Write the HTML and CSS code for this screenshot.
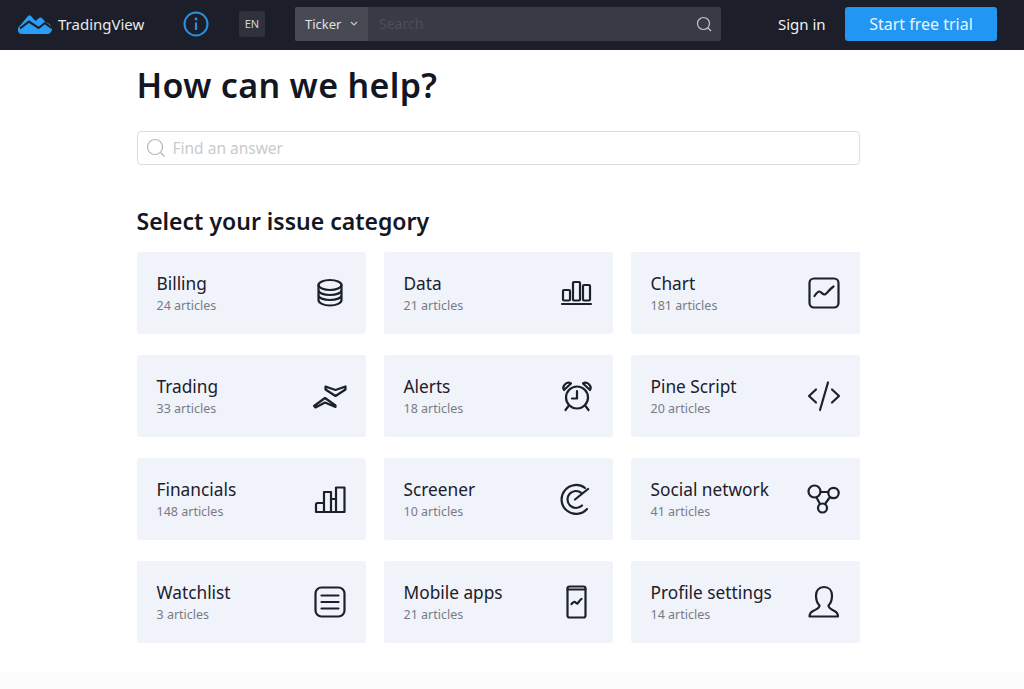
FILE: index.html
```html
<!DOCTYPE html>
<html lang="en">
<head>
<meta charset="utf-8">
<title>TradingView Help Center</title>
<link rel="stylesheet" href="styles.css">
</head>
<body>
<header class="topbar">
  <a class="brand">
    <svg class="brand-logo" viewBox="0 0 34 20" width="34" height="20"><path fill="#2a9df4" d="M0 14 10 2c.8-1 2.200-1 3 0l4.500 5 3.500-3c.8-.7 2-.7 2.800 0l4.200 4.500c2.600.6 6 2.800 6 6.200 0 2.800-2 5.300-4.800 5.300H4c-2.500 0-4-1.700-4-3.500z"/><path fill="none" stroke="#1c1f2a" stroke-width="2.200" d="M2 14.500 11 7.500l9.500 6.500 6.500-5 7 5"/></svg>
    <span class="brand-name">TradingView</span>
  </a>
  <svg class="info" viewBox="0 0 26 26" width="26" height="26"><circle cx="13" cy="13" r="11.500" fill="none" stroke="#2a8fdc" stroke-width="2"/><circle cx="13" cy="8" r="1.400" fill="#2a8fdc"/><path d="M13 11.500v7.500" stroke="#2a8fdc" stroke-width="2.200" fill="none"/></svg>
  <span class="lang">EN</span>
  <div class="search">
    <div class="ticker">Ticker
      <svg viewBox="0 0 8 5" width="8" height="5"><path d="M1 1l3 3 3-3" fill="none" stroke="#c9cbd0" stroke-width="1.100"/></svg>
    </div>
    <span class="search-hint">Search</span>
    <svg class="search-icon" viewBox="0 0 16 16" width="16" height="16"><circle cx="7.500" cy="7.500" r="6" fill="none" stroke="#c3c5ca" stroke-width="1.200"/><path d="M12 12l3 3" stroke="#c3c5ca" stroke-width="1.200"/></svg>
  </div>
  <a class="signin">Sign in</a>
  <a class="trial">Start free trial</a>
</header>

<main class="content">
  <h1 class="title">How can we help?</h1>
  <div class="answer">
    <svg viewBox="0 0 20 20" width="20" height="20"><circle cx="9" cy="9" r="7.500" fill="none" stroke="#b5b7bb" stroke-width="1.200"/><path d="M14.500 14.500l4 4" stroke="#b5b7bb" stroke-width="1.200"/></svg>
    <span>Find an answer</span>
  </div>
  <h2 class="subtitle">Select your issue category</h2>
  <section class="grid">
    <a class="card"><div class="card-text"><div class="card-name">Billing</div><div class="card-count">24 articles</div></div>
      <svg class="ico" viewBox="0 0 36 36"><ellipse cx="18" cy="10" rx="11.500" ry="5"/><path d="M6.500 10v15c0 3 5 5.500 11.500 5.500s11.500-2.500 11.500-5.500V10M6.500 15c0 3 5 5 11.500 5s11.500-2 11.500-5M6.500 20c0 3 5 5 11.500 5s11.500-2 11.500-5"/></svg></a>
    <a class="card"><div class="card-text"><div class="card-name">Data</div><div class="card-count">21 articles</div></div>
      <svg class="ico" viewBox="0 0 36 36"><rect x="4" y="15" width="7" height="10.500" rx="1"/><rect x="14" y="7" width="7" height="18.500" rx="1"/><rect x="24" y="10" width="7" height="15.500" rx="1"/><path d="M3 29h29"/></svg></a>
    <a class="card"><div class="card-text"><div class="card-name">Chart</div><div class="card-count">181 articles</div></div>
      <svg class="ico" viewBox="0 0 36 36"><rect x="3.500" y="3.500" width="29" height="29" rx="4.500"/><path d="M8.500 21c2-3 3.500-4.500 5-4.500s3 3 5 3 4.500-5 9-8"/></svg></a>

    <a class="card"><div class="card-text"><div class="card-name">Trading</div><div class="card-count">33 articles</div></div>
      <svg class="ico" viewBox="0 0 36 36"><path d="M13.500 8.500 23.500 12l10-3.500v3L23.500 18l-10-6.500zM2 28l11-8 10.500 7.500v1.500l-10.500-4.500L3.500 29.500z"/></svg></a>
    <a class="card"><div class="card-text"><div class="card-name">Alerts</div><div class="card-count">18 articles</div></div>
      <svg class="ico" viewBox="0 0 36 36"><circle cx="18" cy="19.500" r="11"/><path d="M18 13v7.500h-5M5 12c-2.500-4 3-9 7-6.500zM31 12c2.500-4-3-9-7-6.500zM9.500 28l-3 4M26.500 28l3 4"/></svg></a>
    <a class="card"><div class="card-text"><div class="card-name">Pine Script</div><div class="card-count">20 articles</div></div>
      <svg class="ico" viewBox="0 0 36 36"><path d="M10 11.500 3 18l7 6.500M26 11.500l7 6.500-7 6.500M22 4.500 14 32"/></svg></a>

    <a class="card"><div class="card-text"><div class="card-name">Financials</div><div class="card-count">148 articles</div></div>
      <svg class="ico" viewBox="0 0 36 36"><path d="M4 31v-7.500c0-1 .5-1.500 1.500-1.500H12M12 31V11h7v20M19 18h5M24 31V6.500h8.500V31M4 31h28.500"/></svg></a>
    <a class="card"><div class="card-text"><div class="card-name">Screener</div><div class="card-count">10 articles</div></div>
      <svg class="ico" viewBox="0 0 36 36"><path d="M26 7A14.500 14.500 0 1 0 28 28M22.500 12A8.500 8.500 0 1 0 23 24.500M16 18.500 29 8"/></svg></a>
    <a class="card"><div class="card-text"><div class="card-name">Social network</div><div class="card-count">41 articles</div></div>
      <svg class="ico" viewBox="0 0 36 36"><circle cx="8.500" cy="10.500" r="6"/><circle cx="27.500" cy="12" r="5.200"/><circle cx="16.500" cy="27" r="4.500"/><path d="M14.500 11h7.500M10.500 16.500l3.500 6.500M24 16l-5 7"/></svg></a>

    <a class="card"><div class="card-text"><div class="card-name">Watchlist</div><div class="card-count">3 articles</div></div>
      <svg class="ico" viewBox="0 0 36 36"><rect x="3.500" y="3.500" width="29" height="29" rx="6"/><path d="M9.500 11.500h17M9.500 18h17M9.500 24.500h17"/></svg></a>
    <a class="card"><div class="card-text"><div class="card-name">Mobile apps</div><div class="card-count">21 articles</div></div>
      <svg class="ico" viewBox="0 0 36 36"><rect x="8.500" y="2.500" width="18" height="31" rx="2"/><path d="M8.500 5.500h18M12.500 20c1.500-2 2.500-2.500 3.500-2s1.500 2 2.500 1.500 2-3.500 4-4.500"/></svg></a>
    <a class="card"><div class="card-text"><div class="card-name">Profile settings</div><div class="card-count">14 articles</div></div>
      <svg class="ico" viewBox="0 0 36 36"><path d="M18 3c5 0 8 3.500 8 8.500 0 5-1.500 8-3.500 10 0 2.500 2 3.500 5 5 3 1.300 4.500 3 4.500 6H3.500c0-3 1.500-4.700 4.500-6 3-1.500 5.500-2.500 5.500-5-2-2-3.500-5-3.500-10C10 6.500 13 3 18 3z"/></svg></a>
  </section>
</main>
<div class="foot"></div>
</body>
</html>
```
FILE: styles.css
```css
* { box-sizing: border-box; }
html, body { height: 100%; }
body {
  margin: 0;
  background: #fff;
  color: #131722;
  font-family: "Noto Sans", "Open Sans", sans-serif;
  overflow: hidden;
  display: flex;
  flex-direction: column;
}
.topbar {
  flex: none;
  height: 50px;
  background: #1c1f2a;
  display: flex;
  align-items: center;
  padding: 0 27px 3px 18px;
}
.brand { display: flex; flex: none; align-items: center; gap: 6px; width: 165px; }
.brand-name { color: #e8e9eb; font-size: 15px; }
.info { margin-right: 30px; flex: none; }
.lang {
  flex: none;
  width: 26px; height: 26px;
  background: #2f323c;
  border-radius: 3px;
  color: #d5d6d9;
  font-size: 11px;
  display: flex; align-items: center; justify-content: center;
  margin-right: 30px;
}
.search {
  flex: none;
  width: 426px; height: 34px;
  background: #383b45;
  border-radius: 2px;
  display: flex;
  align-items: center;
  padding-right: 9px;
}
.ticker {
  width: 73px; height: 34px;
  background: #474a53;
  color: #e0e1e3;
  font-size: 13px;
  display: flex; align-items: center; gap: 9px;
  padding-left: 10px;
  border-radius: 2px 0 0 2px;
}
.search-hint { color: #4c4f58; font-size: 14px; margin-left: 11px; flex: 1; }
.signin { color: #f2f2f3; font-size: 15px; margin-left: 57px; white-space: nowrap; flex: none; width: 67px; }
.trial {
  flex: none;
  width: 152px; height: 34px;
  background: #2196f3;
  color: #e9f4fd;
  font-size: 16px;
  border-radius: 3px;
  display: flex; align-items: center; justify-content: center;
}
.content { flex: 1; padding: 13px 0 0 136.500px; width: 860px; }
.title { margin: 0; font-size: 34px; font-weight: 600; line-height: 44px; letter-spacing: .32px; }
.answer {
  margin-top: 24px;
  height: 34px;
  border: 1px solid #dcdde0;
  border-radius: 4px;
  display: flex; align-items: center; gap: 7px;
  padding-left: 8px;
  color: #c9cacd;
  font-size: 15.500px;
}
.subtitle { margin: 41px 0 0; font-size: 23px; font-weight: 600; line-height: 30px; }
.grid {
  margin-top: 16px;
  display: grid;
  grid-template-columns: repeat(3, 229px);
  grid-auto-rows: 82px;
  column-gap: 18px;
  row-gap: 21px;
}
.card {
  background: #f0f3fa;
  border-radius: 3px;
  display: flex;
  align-items: center;
  justify-content: space-between;
  padding: 0 18px 0 20px;
}
.card-text { padding-top: 2px; }
.card-name { font-size: 17.300px; line-height: 24px; color: #1c202b; }
.card-count { font-size: 12.500px; line-height: 20px; color: #787b86; }
.ico {
  width: 36px; height: 36px;
  fill: none;
  stroke: #1c202b;
  stroke-width: 2.200;
  stroke-linejoin: round;
  stroke-linecap: round;
}
.foot { flex: none; height: 17px; background: #fcfcfc; }
```
